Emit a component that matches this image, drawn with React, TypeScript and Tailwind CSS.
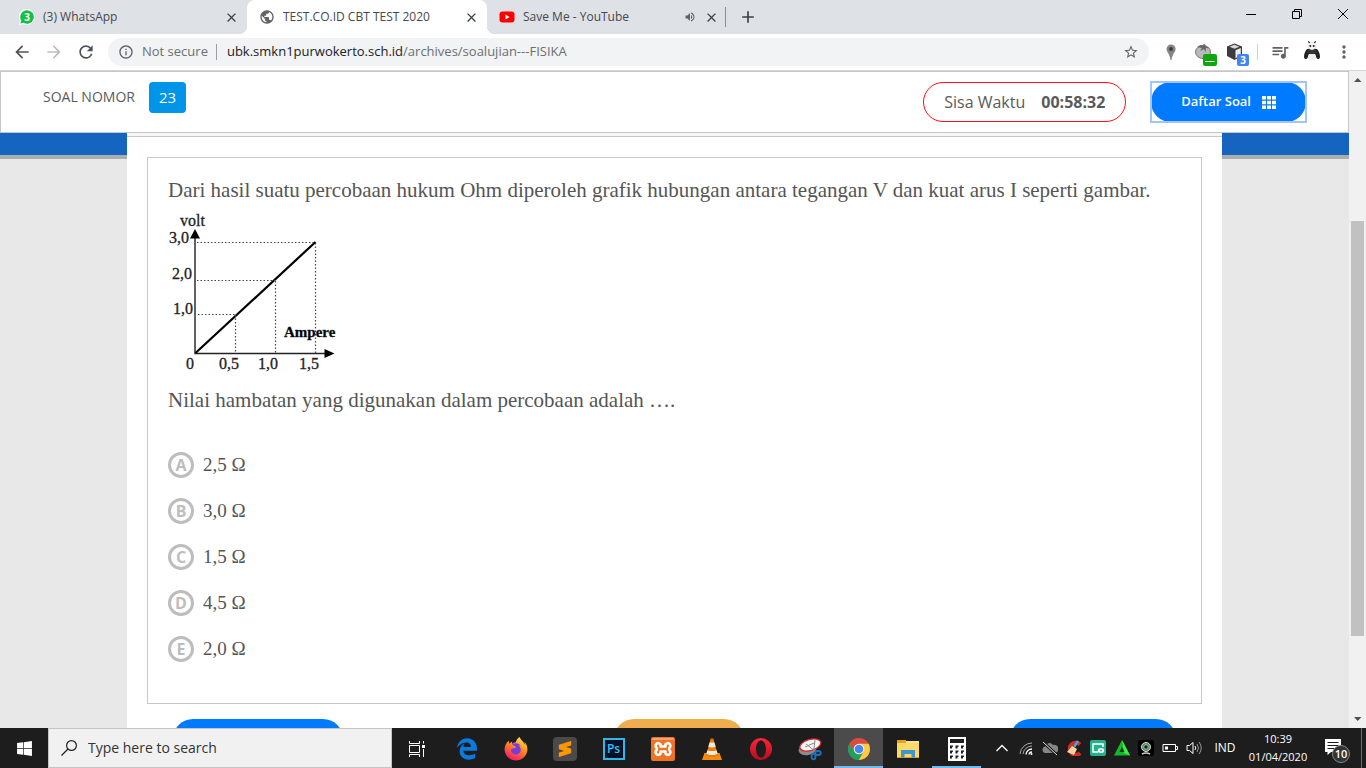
import type { ReactNode } from "react";
import {
  MdAdd,
  MdArrowBack,
  MdArrowForward,
  MdClose,
  MdInfoOutline,
  MdMoreVert,
  MdPublic,
  MdQueueMusic,
  MdRefresh,
  MdStarBorder,
  MdVolumeUp,
} from "react-icons/md";
import { FaEdgeLegacy, FaFirefoxBrowser, FaWindows } from "react-icons/fa";
import { SiSublimetext } from "react-icons/si";

type TabProps = {
  title: string;
  icon: ReactNode;
  active?: boolean;
  audible?: boolean;
};

function Tab({ title, icon, active, audible }: TabProps) {
  return (
    <div
      className={
        active
          ? "relative flex h-full w-60 items-center rounded-t-lg bg-white pl-3 pr-2"
          : "flex h-full w-60 items-center pl-3 pr-2"
      }
    >
      {active && (
        <>
          <span className="absolute bottom-0 -left-2 size-2 bg-[radial-gradient(circle_at_0_0,transparent_8px,white_8px)]" />
          <span className="absolute bottom-0 -right-2 size-2 bg-[radial-gradient(circle_at_100%_0,transparent_8px,white_8px)]" />
        </>
      )}
      <button role="tab" aria-selected={!!active} className="flex min-w-0 flex-1 items-center gap-2 text-left text-xs text-[#45494d]">
        {icon}
        <span className="truncate">{title}</span>
      </button>
      {audible && <MdVolumeUp className="mr-2 size-3 text-[#5f6368]" aria-label="Audio" />}
      <button aria-label={"Close " + title} className="text-[#3c4043]">
        <MdClose className="size-[15px]" />
      </button>
    </div>
  );
}

function WhatsAppIcon() {
  return (
    <svg viewBox="0 0 16 16" className="size-4 shrink-0">
      <path d="M8 0a8 8 0 1 1-4 15L0 16l1-4A8 8 0 0 1 8 0" fill="#fff" />
      <path d="M8 1.200a6.800 6.800 0 1 1-3.500 12.600L1.400 14.600l.9-3A6.800 6.800 0 0 1 8 1.200" fill="#12c143" />
      <text x="8" y="11.500" textAnchor="middle" fontSize="10" fontWeight="700" fill="#fff">3</text>
    </svg>
  );
}

function YouTubeIcon() {
  return (
    <svg viewBox="0 0 16 16" className="size-4 shrink-0">
      <rect x="0.500" y="2.500" width="15" height="11" rx="3" fill="#f00" />
      <path d="M6.500 5.500v5l4-2.500z" fill="#fff" />
    </svg>
  );
}

function TabStrip() {
  return (
    <header className="flex h-[34px] shrink-0 bg-[#dee1e6]">
      <div role="tablist" className="flex pl-[7px]">
        <Tab title="(3) WhatsApp" icon={<WhatsAppIcon />} />
        <Tab title="TEST.CO.ID CBT TEST 2020" icon={<MdPublic className="size-4 shrink-0 text-[#5f6368]" />} active />
        <Tab title="Save Me - YouTube" icon={<YouTubeIcon />} audible />
      </div>
      <div className="flex flex-1 items-center">
        <span className="-ml-0.5 h-5 w-px bg-[#8a8d91]" />
        <button aria-label="New tab" className="ml-3 text-[#3c4043]">
          <MdAdd className="size-5" />
        </button>
      </div>
      <div className="flex h-7">
        <button aria-label="Minimize" className="grid w-[46px] place-items-center">
          <svg viewBox="0 0 10 10" className="size-2.5"><path d="M0 5.500h10" stroke="#000" /></svg>
        </button>
        <button aria-label="Restore" className="grid w-[46px] place-items-center">
          <svg viewBox="0 0 10 10" className="size-2.5" fill="none" stroke="#000"><path d="M.5 2.500h7v7h-7zM2.500 2.500v-2h7v7h-2" /></svg>
        </button>
        <button aria-label="Close window" className="grid w-[46px] place-items-center">
          <svg viewBox="0 0 10 10" className="size-2.5"><path d="M0 0l10 10M10 0L0 10" stroke="#000" /></svg>
        </button>
      </div>
    </header>
  );
}

function Toolbar() {
  return (
    <nav className="flex h-[37px] shrink-0 items-center border-b border-[#d4d4d4] bg-white px-3">
      <button aria-label="Back" className="mr-3 text-[#4f5357]"><MdArrowBack className="size-5" /></button>
      <button aria-label="Forward" className="mr-3 text-[#bcbec1]"><MdArrowForward className="size-5" /></button>
      <button aria-label="Reload" className="mr-3 text-[#4f5357]"><MdRefresh className="size-5" /></button>
      <div className="flex h-7 flex-1 items-center rounded-full bg-[#f1f3f4] px-2.5 text-[13px] text-[#6b6f73]">
        <MdInfoOutline className="size-4 text-[#5f6368]" />
        <span className="ml-2">Not secure</span>
        <span className="ml-2 mr-2.5 h-4 w-px bg-[#9a9da0]" />
        <span className="flex-1">
          <span className="text-[#202124]">ubk.smkn1purwokerto.sch.id</span>/archives/soalujian---FISIKA
        </span>
        <button aria-label="Bookmark this page" className="text-[#5f6368]"><MdStarBorder className="size-4" /></button>
      </div>
      <button aria-label="Location extension" className="ml-3">
        <svg viewBox="0 0 20 20" className="size-5">
          <path d="M10 2.500a4.600 4.600 0 0 1 4.600 4.600c0 3-3.400 5-4 10.900H9.500c-.6-5.900-4-7.900-4-10.900A4.600 4.600 0 0 1 10 2.500" fill="#858585" />
          <circle cx="10" cy="7" r="1.900" fill="#3a3a3a" />
        </svg>
      </button>
      <button aria-label="Tomato extension" className="ml-3">
        <svg viewBox="0 0 24 28" className="h-7 w-6">
          <ellipse cx="10" cy="14" rx="7.500" ry="6.500" fill="#b9b9b9" stroke="#777" />
          <path d="M4 9l5 1-2 3 4-2 1.500 3 .5-4 4 .2-4.500-2L12 6l-2 .5.500 1.500-3-1z" fill="#666" />
          <rect x="10" y="16" width="14" height="12" rx="2" fill="#0ea80e" />
          <path d="M12 23.500h9.500" stroke="#fff" />
        </svg>
      </button>
      <button aria-label="Package extension" className="ml-2">
        <svg viewBox="0 0 24 28" className="h-7 w-6">
          <path d="M9.500 5.500l7.500 3v9.500l-7.500 4-7.500-4V8.500z" fill="#3c3c3c" />
          <path d="M9.500 6.800l5 2-5 2-5-2z" fill="#d9d9d9" />
          <path d="M10.500 12.300l5.300-2.300v7.300l-5.300 2.900z" fill="#eee" />
          <rect x="12" y="16" width="12" height="12" rx="2" fill="#4285f4" />
          <text x="18" y="25.500" textAnchor="middle" fontSize="10" fontWeight="700" fill="#fff">3</text>
        </svg>
      </button>
      <span className="ml-2 mr-3 h-4 w-px bg-[#cfcfcf]" />
      <button aria-label="Media control" className="text-[#5f6368]"><MdQueueMusic className="size-5" /></button>
      <button aria-label="Profile" className="ml-3">
        <svg viewBox="0 0 20 22" className="h-[22px] w-5">
          <path d="M5 8h10c2 2 3 5 3 8 0 2-2.500 3-3.500 1L13 13H7l-1.500 4c-1 2-3.500 1-3.500-1 0-3 1-6 3-8" fill="#222" />
          <ellipse cx="10" cy="5" rx="4.200" ry="4" fill="#f4f4f4" stroke="#d0d0d0" strokeWidth="0.500" />
          <path d="M6.500 1.500l1-.7M13.500 1.500l-1-.7" stroke="#222" strokeWidth="2" />
          <circle cx="8.300" cy="5" r="1" fill="#222" />
          <circle cx="11.700" cy="5" r="1" fill="#222" />
          <path d="M7 7.500q3 3 6 0l2 4q-5 3-10 0z" fill="#333" />
          <path d="M7 13h6l1.500 5q-4.500 2.500-9 0z" fill="#eee" />
        </svg>
      </button>
      <button aria-label="Menu" className="ml-3 text-[#5f6368]"><MdMoreVert className="size-5" /></button>
    </nav>
  );
}

function GridIcon() {
  return (
    <svg viewBox="0 0 14 13" className="h-[13px] w-3.5" fill="currentColor">
      <path d="M0 0h4v3.500H0zM5 0h4v3.500H5zM10 0h4v3.500h-4zM0 4.700h4v3.500H0zM5 4.700h4v3.500H5zM10 4.700h4v3.500h-4zM0 9.400h4V13H0zM5 9.400h4V13H5zM10 9.400h4V13h-4z" />
    </svg>
  );
}

function ExamHeader() {
  return (
    <div className="flex h-[62px] items-start border border-[#c6c6c6] bg-white px-[42px] pt-2.5 text-[#5a5a5a]">
      <span className="text-sm leading-[30px]">SOAL NOMOR</span>
      <span className="ml-3.5 rounded bg-[#0095e8] px-2.5 text-[15px] leading-[31px] text-white">23</span>
      <div className="ml-auto flex h-10 items-center gap-4 rounded-full border border-[#ff0c14] px-5 text-base">
        <span>Sisa Waktu</span>
        <b className="font-bold">00:58:32</b>
      </div>
      <button className="ml-[25px] outline-2 -outline-offset-1 outline-[#a3c3f9]">
        <span className="flex h-10 items-center gap-[11px] rounded-full bg-[#007bff] px-[30px] text-[13px] font-semibold text-white">
          Daftar Soal
          <GridIcon />
        </span>
      </button>
    </div>
  );
}

function OhmChart() {
  return (
    <svg viewBox="168 212 172 164" className="block h-[164px] w-[172px]" role="img" aria-label="Grafik tegangan terhadap kuat arus">
      <g fill="none" stroke="#222">
        <path d="M195 238V353.500H326" strokeWidth="1.400" />
        <path d="M195.500 353L315.500 242" stroke="#000" strokeWidth="2.200" />
        <path d="M197 242.500H315M197 280.500H275M198 314.500H235M235.500 315V353M275.500 281V353M315.500 243V353" stroke="#444" strokeWidth="1.200" strokeDasharray="1.500 2" />
      </g>
      <path d="M195 229l5 9.500h-10zM334.500 353.500l-10 4.500v-9z" fill="#000" />
      <g fill="#222" stroke="#222" strokeWidth="0.300" fontFamily="'Liberation Serif', serif" fontSize="16">
        <text x="180" y="225.500">volt</text>
        <text x="169" y="243">3,0</text>
        <text x="172" y="279">2,0</text>
        <text x="173" y="314">1,0</text>
        <text x="186" y="368.500">0</text>
        <text x="219" y="368.500">0,5</text>
        <text x="258" y="368.500">1,0</text>
        <text x="299" y="368.500">1,5</text>
        <text x="284" y="337" fontWeight="700" fontSize="15" fill="#000">Ampere</text>
      </g>
    </svg>
  );
}

const options = [
  ["A", "2,5 Ω"],
  ["B", "3,0 Ω"],
  ["C", "1,5 Ω"],
  ["D", "4,5 Ω"],
  ["E", "2,0 Ω"],
];

function Question() {
  return (
    <section className="border border-[#c8c8c8] px-5 pb-[41px] pt-[17px] font-['Palatino_Linotype','Liberation_Serif',serif] text-[21px] leading-[30px] text-[#555]">
      <p>Dari hasil suatu percobaan hukum Ohm diperoleh grafik hubungan antara tegangan V dan kuat arus I seperti gambar.</p>
      <div className="pb-1.5 pt-[7px]">
        <OhmChart />
      </div>
      <p className="pt-[3px]">Nilai hambatan yang digunakan dalam percobaan adalah ….</p>
      <fieldset aria-label="Pilihan jawaban" className="mt-[37px] flex flex-col gap-5 text-[19px]">
        {options.map(([letter, text]) => (
          <label key={letter} className="flex h-[26px] items-center gap-[9px]">
            <span className="grid size-[26px] place-items-center rounded-full border-[3px] border-[#bdbdbd] font-['Open_Sans',sans-serif] text-base font-bold text-[#bdbdbd] has-checked:border-[#007bff] has-checked:text-[#007bff]">
              <input type="radio" name="jawaban" value={letter} className="col-start-1 row-start-1 size-5 appearance-none" />
              <span className="pointer-events-none col-start-1 row-start-1 leading-5">{letter}</span>
            </span>
            <span>{text}</span>
          </label>
        ))}
      </fieldset>
    </section>
  );
}

function SideBand() {
  return (
    <div className="w-[127px] shrink-0">
      <div className="h-[26px] border-b-4 border-[#adadad] bg-[#1565c0]" />
    </div>
  );
}

function Scrollbar() {
  return (
    <div className="flex w-[17px] shrink-0 flex-col bg-[#f1f1f1]">
      <svg viewBox="0 0 17 17" className="size-[17px]"><path d="M5 11h7.500L8.700 7z" fill="#505050" /></svg>
      <div className="flex-[133]" />
      <div className="mx-0.5 flex-[415] bg-[#c1c1c1]" />
      <div className="flex-[75]" />
      <svg viewBox="0 0 17 17" className="size-[17px]"><path d="M5 6h7.500L8.700 10z" fill="#505050" /></svg>
    </div>
  );
}

function TaskButton({ label, children, state }: { label: string; children: ReactNode; state?: "active" | "running" }) {
  const look =
    state === "active"
      ? "grid w-[49px] place-items-center bg-[#4b4b4b] pt-px shadow-[inset_0_-2px_#76b9ed]"
      : "grid w-[49px] place-items-center pt-px";
  return (
    <button aria-label={label} className={state === "running" ? "grid w-[49px] place-items-center pt-px shadow-[inset_0_-2px_#76b9ed]" : look}>
      {children}
    </button>
  );
}

function VlcIcon() {
  return (
    <svg viewBox="0 0 24 24" className="size-6">
      <path d="M4.500 16h15l2.500 7H2z" fill="#f68b0c" />
      <path d="M10.700 1.500h2.600L18 18.500c-2.500 2-9.500 2-12 0z" fill="#f47b00" />
      <path d="M9.600 5.500h4.800l1.300 4.300c-2 1-5.400 1-7.400 0zM7.400 13.200c2.500 1.200 6.700 1.200 9.200 0l1 3.600c-3 1.600-8.200 1.600-11.200 0z" fill="#e9e9e9" />
    </svg>
  );
}

function XamppIcon() {
  return (
    <svg viewBox="0 0 24 24" className="size-6">
      <rect width="24" height="24" rx="2" fill="#ef7324" />
      <rect x="1" y="1" width="22" height="6" rx="1.500" fill="#f6a36c" />
      <rect x="1" y="3" width="22" height="9" fill="#ef7324" />
      <g fill="none" stroke="#fff" strokeWidth="2.600" strokeLinejoin="round" strokeLinecap="round">
        <path d="M9.500 9.500V7.500a2.600 2.600 0 1 0-4 3.200q1 1.300 0 2.600a2.600 2.600 0 1 0 4 3.200v-2h5v2a2.600 2.600 0 1 0 4-3.200q-1-1.300 0-2.600a2.600 2.600 0 1 0-4-3.200v2z" />
      </g>
    </svg>
  );
}

function ChromeIcon() {
  return (
    <svg viewBox="0 0 24 24" className="size-6">
      <circle cx="12" cy="12" r="11" fill="#de4b3e" />
      <path d="M12 6.800h9.650A11 11 0 0 1 12 23h-.5l5-8.400z" fill="#fccb43" />
      <path d="M2.470 6.500L7.500 14.600 12 17.200l4.500-2.600L11.700 23A11 11 0 0 1 2.470 6.500" fill="#1fa05b" />
      <circle cx="12" cy="12" r="5.300" fill="#f3f3f3" />
      <circle cx="12" cy="12" r="4.300" fill="#4688f1" />
    </svg>
  );
}

function SnipIcon() {
  return (
    <svg viewBox="0 0 24 24" className="size-6">
      <ellipse cx="9.500" cy="12.500" rx="9" ry="5.500" transform="rotate(-10 9.500 12.500)" fill="#8b8b8b" />
      <ellipse cx="12.300" cy="8" rx="10.800" ry="5.500" transform="rotate(-16 12.300 8)" fill="#f5f5f5" stroke="#d5262f" strokeWidth="1.300" />
      <path d="M8 7l9 7M17 3l-1.500 12M7 10l9-4" stroke="#888" fill="none" />
      <g fill="none" stroke="#1c76bf" strokeWidth="1.800">
        <ellipse cx="20" cy="16" rx="2.800" ry="2" />
        <ellipse cx="15.500" cy="19.500" rx="2" ry="2.800" />
      </g>
    </svg>
  );
}

function ExplorerIcon() {
  return (
    <svg viewBox="0 0 24 24" className="size-6">
      <path d="M1 3h9v3h13v15H1z" fill="#e6a411" />
      <path d="M10 4h13v3H10z" fill="#fbe09a" />
      <path d="M1 6h22v14H1z" fill="#fdd768" />
      <path d="M5 20.500V13h14v7.500h-3.500V17h-7v3.500z" fill="#3d96d4" />
    </svg>
  );
}

function CalculatorIcon() {
  return (
    <svg viewBox="0 0 20 24" className="h-6 w-5">
      <rect x="1" width="18" height="24" fill="#fff" />
      <path d="M3 2h14v4H3z" fill="#1e1e1e" />
      <g fill="#1e1e1e">
        {[8.500, 13.500, 18.500].map((y) =>
          [3, 8.500, 14].map((x) => <path key={x + "-" + y} d={`M${x} ${y}h3v1.200l-1 .3v1.500h-2z`} />),
        )}
      </g>
    </svg>
  );
}

function TrayIcon({ label, children }: { label: string; children: ReactNode }) {
  return (
    <button aria-label={label} className="grid w-6 place-items-center">
      <svg viewBox="0 0 16 16" className="size-4" fill="none">{children}</svg>
    </button>
  );
}

function Taskbar() {
  return (
    <footer className="flex h-10 shrink-0 bg-[#1d1d1d] text-white">
      <button aria-label="Start" className="grid w-12 place-items-center"><FaWindows className="size-[17px]" /></button>
      <label className="flex w-[344px] items-center gap-[11px] border border-[#c4c4c4] bg-[#f1f1f1] pl-3">
        <svg viewBox="0 0 16 16" className="size-4" fill="none" stroke="#222" strokeWidth="1.200">
          <circle cx="10.500" cy="5.500" r="4.900" />
          <path d="M7 9L.5 15.500" />
        </svg>
        <input type="text" aria-label="Search" placeholder="Type here to search" className="min-w-0 flex-1 bg-transparent text-sm text-[#333] outline-none placeholder:text-[#333]" />
      </label>
      <div className="flex pl-px">
        <TaskButton label="Task View">
          <svg viewBox="0 0 17 16" className="h-4 w-[17px]" fill="none" stroke="#fff">
            <path d="M.5 0v2.500h10V0M.5 16v-2.500h10V16M.5 4.500h10v7H.5zM14.500 0v2.500M14.500 8v8" />
            <path d="M13 4h3v3h-3z" fill="#fff" stroke="none" />
          </svg>
        </TaskButton>
        <TaskButton label="Edge"><FaEdgeLegacy className="size-[22px] text-[#0a7bdc]" /></TaskButton>
        <TaskButton label="Firefox">
          <svg viewBox="0 0 24 24" className="size-6">
            <defs>
              <linearGradient id="fire" x1="0.800" y1="0" x2="0.300" y2="1">
                <stop offset="0" stopColor="#fff04a" />
                <stop offset="0.450" stopColor="#ff8a1f" />
                <stop offset="1" stopColor="#f5156c" />
              </linearGradient>
            </defs>
            <circle cx="12" cy="12" r="7" fill="#7a3bd8" />
            <FaFirefoxBrowser size={24} fill="url(#fire)" />
          </svg>
        </TaskButton>
        <TaskButton label="Sublime Text">
          <span className="grid size-6 place-items-center rounded-sm bg-[#4a4a4a]"><SiSublimetext className="size-4 text-[#ff9800]" /></span>
        </TaskButton>
        <TaskButton label="Photoshop">
          <span className="grid size-[22px] place-items-center border-2 border-[#2fb9ea] bg-[#071026] text-xs leading-none font-semibold text-[#35c3f5]">Ps</span>
        </TaskButton>
        <TaskButton label="XAMPP"><XamppIcon /></TaskButton>
        <TaskButton label="VLC"><VlcIcon /></TaskButton>
        <TaskButton label="Opera">
          <svg viewBox="0 0 24 24" className="size-6">
            <defs>
              <linearGradient id="opera" x1="0" y1="0" x2="0" y2="1">
                <stop offset="0" stopColor="#ff2438" />
                <stop offset="1" stopColor="#b50d20" />
              </linearGradient>
            </defs>
            <path fillRule="evenodd" d="M12 1a11 11 0 1 1 0 22 11 11 0 0 1 0-22m0 2.500c-3 0-5 3.800-5 8.500s2 8.500 5 8.500 5-3.800 5-8.500-2-8.500-5-8.500" fill="url(#opera)" />
          </svg>
        </TaskButton>
        <TaskButton label="Snipping Tool"><SnipIcon /></TaskButton>
        <TaskButton label="Chrome" state="active"><ChromeIcon /></TaskButton>
        <TaskButton label="File Explorer"><ExplorerIcon /></TaskButton>
        <TaskButton label="Calculator" state="running"><CalculatorIcon /></TaskButton>
      </div>

      <div className="ml-auto flex">
        <TrayIcon label="Show hidden icons"><path d="M2.500 11L8 5.500l5.500 5.500" stroke="#fff" strokeWidth="1.300" /></TrayIcon>
        <TrayIcon label="Network">
          <g stroke="#aaa"><path d="M2 14A12 12 0 0 1 14 3M5 14a9 9 0 0 1 9-8" /></g>
          <g stroke="#fff" strokeWidth="1.300"><path d="M8 14.500a6 6 0 0 1 6-5.500M11 14.500a3 3 0 0 1 3-2.500" /></g>
          <circle cx="13.500" cy="14" r="1" fill="#fff" />
        </TrayIcon>
        <TrayIcon label="OneDrive">
          <path d="M3.500 13a3.300 3.300 0 0 1-.5-6.500A4.500 4.500 0 0 1 11 5a4 4 0 0 1 2.500 8z" fill="#858585" />
          <path d="M1 2l14 13" stroke="#1d1d1d" strokeWidth="3" />
          <path d="M1 2l14 13" stroke="#ddd" />
        </TrayIcon>
        <TrayIcon label="CCleaner">
          <path d="M14 4.500A6 6 0 1 0 14 13" stroke="#d22d20" strokeWidth="4" />
          <path d="M12 1L8 7" stroke="#4aa3dc" strokeWidth="2.500" />
          <path d="M6 6l5 3-3 6-7-3z" fill="#f0d5a5" />
        </TrayIcon>
        <TrayIcon label="Screen recorder">
          <rect width="16" height="16" rx="2" fill="#24b28e" />
          <path d="M8 12H3V4h10v3" stroke="#fff" strokeWidth="1.500" />
          <ellipse cx="11" cy="10.500" rx="3.200" ry="2.500" fill="#fff" />
          <circle cx="11" cy="10.500" r="1" fill="#24b28e" />
        </TrayIcon>
        <TrayIcon label="Smadav">
          <path d="M8 0l8 15.500H0z" fill="#10b82a" />
          <path d="M8 0l8 15.500-6-2.500z" fill="#41ee45" />
          <path d="M8 7l2.500 5h-5z" fill="#073b0e" />
        </TrayIcon>
        <TrayIcon label="Webcam">
          <rect width="16" height="16" rx="2" fill="#000" />
          <circle cx="8" cy="7" r="4.500" fill="#777" stroke="#ddd" />
          <circle cx="8" cy="7" r="2.300" fill="#153019" stroke="#78d88a" />
          <path d="M4 14q4-2 8 0" stroke="#ccc" strokeWidth="1.500" />
        </TrayIcon>
        <TrayIcon label="Battery">
          <path d="M1 4.500h12.500v7H1zM14 6.500h1.500v3H14" stroke="#fff" />
          <path d="M3 6.500h3v3H3z" fill="#fff" />
        </TrayIcon>
        <TrayIcon label="Volume">
          <path d="M1 5.500h2.500L7 2.500v11L3.500 10.500H1zM9 6q1.500 2 0 4" stroke="#fff" />
          <path d="M11 4q3 4 0 8M13 2q4.500 6 0 12" stroke="#999" />
        </TrayIcon>
        <button className="w-[38px] text-xs">IND</button>
        <button className="w-[68px] text-center text-[11px] leading-[18px]">
          <time className="block">10:39</time>
          <time className="block">01/04/2020</time>
        </button>
        <button aria-label="Notifications" className="grid w-[49px] place-items-center pt-1.5">
          <svg viewBox="0 0 26 24" className="h-6 w-[26px]">
            <path d="M1 0h16v13H7l-3.500 3v-3H1z" fill="#fff" />
            <path d="M3.500 3.500h11M3.500 6.500h11M3.500 9.500h7" stroke="#1d1d1d" />
            <circle cx="17" cy="15" r="8.500" fill="#333" stroke="#888" />
            <text x="17" y="19" textAnchor="middle" fontSize="11" fontWeight="600" fill="#fff">10</text>
          </svg>
        </button>
        <button aria-label="Show desktop" className="w-[5px] border-l border-[#6b6b6b]" />
      </div>
    </footer>
  );
}

export default function App() {
  return (
    <div className="flex h-screen flex-col overflow-hidden bg-white font-['Open_Sans','Noto_Sans',sans-serif]">
      <TabStrip />
      <Toolbar />
      <div className="flex min-h-0 flex-1">
        <div className="flex min-w-0 flex-1 flex-col overflow-hidden bg-[#e8e8e8]">
          <ExamHeader />
          <div className="flex min-h-0 flex-1">
            <SideBand />
            <main className="min-w-0 flex-1 bg-white">
              <div className="h-1 border-b border-[#c8c8c8] bg-[#f7f7f7]" />
              <div className="px-5 pt-5">
                <Question />
              </div>
              <div className="flex justify-between px-[46px] pt-[15px]">
                <button aria-label="Soal sebelumnya" className="h-10 w-[170px] rounded-full bg-[#007bff]" />
                <button aria-label="Ragu-ragu" className="ml-1 h-10 w-[130px] rounded-full bg-[#f0ad4e]" />
                <button aria-label="Soal berikutnya" className="h-10 w-[166px] rounded-full bg-[#007bff]" />
              </div>
            </main>
            <SideBand />
          </div>
        </div>
        <Scrollbar />
      </div>
      <Taskbar />
    </div>
  );
}
